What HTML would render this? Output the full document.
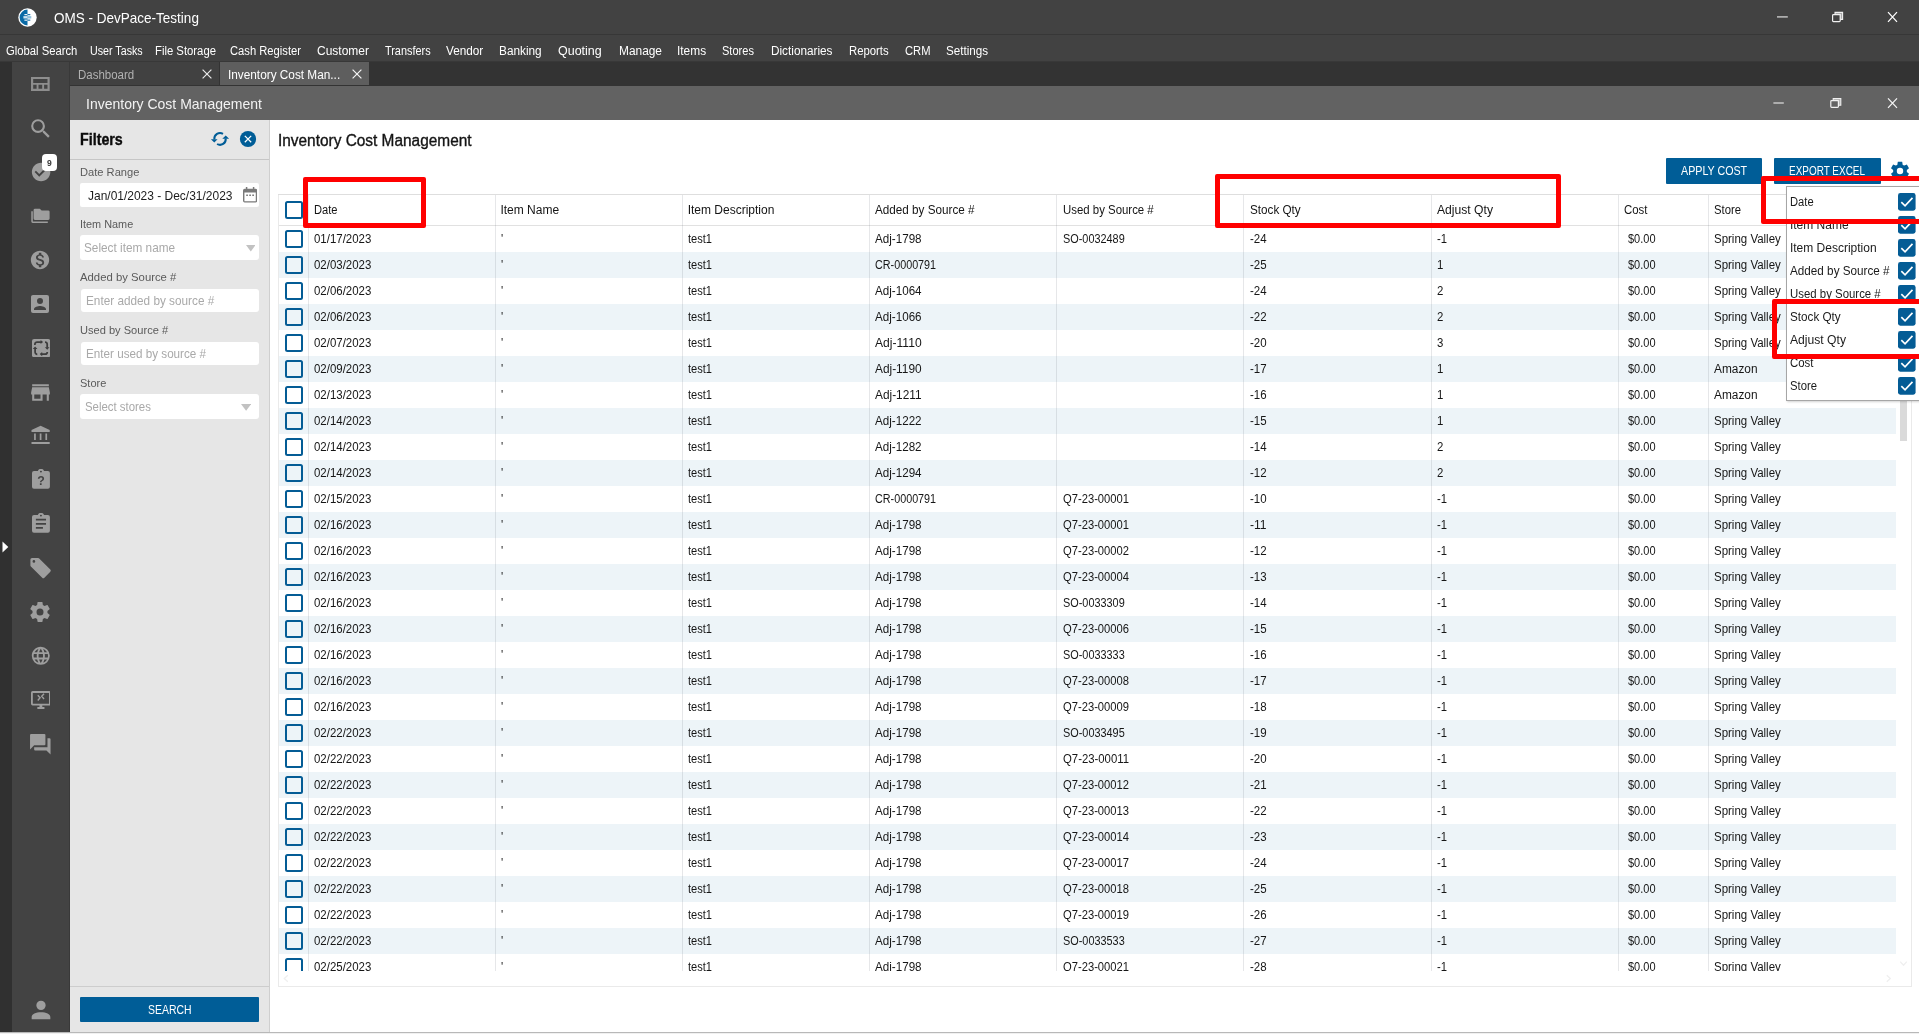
<!DOCTYPE html>
<html lang="en"><head><meta charset="utf-8"><title>OMS - DevPace-Testing</title><style>html,body{margin:0;padding:0}
body{width:1919px;height:1034px;overflow:hidden;position:relative;background:#fff;font-family:"Liberation Sans",sans-serif;}
#root{position:absolute;left:0;top:0;width:1919px;height:1034px;overflow:hidden;will-change:transform}
#root div,#root span,#root svg{position:absolute;display:block;white-space:nowrap;box-sizing:content-box}
</style></head><body><div id="root">
<div style="left:0px;top:0px;width:1919px;height:34px;background:#424242;"></div>
<div style="left:0px;top:34px;width:1919px;height:1px;background:#373737;"></div>
<div style="left:0px;top:35px;width:1919px;height:26px;background:#424242;"></div>
<div style="left:0px;top:61px;width:12px;height:971px;background:#303030;"></div>
<div style="left:12px;top:61px;width:58px;height:971px;background:#434343;"></div>
<div style="left:70px;top:61px;width:1849px;height:25px;background:#333333;"></div>
<div style="left:70px;top:62px;width:149px;height:23px;background:#414141;"></div>
<div style="left:220px;top:62px;width:149px;height:23px;background:#5e5e5e;"></div>
<div style="left:70px;top:86px;width:1849px;height:34px;background:#626262;"></div>
<div style="left:0px;top:61px;width:1919px;height:1px;background:#383838;"></div>
<div style="left:69px;top:62px;width:1px;height:970px;background:#393939;"></div>
<div style="left:70px;top:120px;width:199px;height:912px;background:#e6e6e6;"></div>
<div style="left:269px;top:120px;width:1px;height:912px;background:#cfcfcf;"></div>
<div style="left:0px;top:1032px;width:1919px;height:1px;background:#b8b8b8;"></div>
<div style="left:0px;top:1033px;width:1919px;height:1px;background:#f0f0f0;"></div>
<svg style="left:17.6px;top:7.6px" width="19" height="19" viewBox="0 0 19 19">
<circle cx="9.5" cy="9.5" r="9.2" fill="#fff"/>
<path d="M9.5 1.6 A7.9 7.9 0 0 0 9.5 17.4 Z" fill="#0a6aa6"/>
<rect x="6.4" y="6.1" width="3.1" height="1.1" fill="#fff"/><rect x="5.4" y="8.1" width="4.1" height="2.4" fill="#cfe3ef"/><rect x="6.4" y="11.6" width="3.1" height="1.1" fill="#fff"/>
<rect x="9.5" y="6.1" width="2.8" height="1.1" fill="#0a6aa6"/><rect x="9.5" y="8.1" width="3.8" height="2.4" fill="#8fc0dc"/><rect x="9.5" y="11.6" width="2.8" height="1.1" fill="#0a6aa6"/>
</svg>
<span style="left:53.90px;top:3.67px;font-size:14.5px;line-height:29px;color:#fff;transform:scaleX(0.9317);transform-origin:0 0;">OMS - DevPace-Testing</span>
<svg style="left:1760px;top:0px" width="159" height="125" viewBox="1760 0 159 125"><path d="M1777 16.9H1787.8" stroke="#c8c8c8" stroke-width="1.4" fill="none"/><path d="M1835.0 12.4H1842.6V19.400000000000002H1840.2V14.6H1835.0Z" fill="rgba(255,255,255,.55)" stroke="#f0f0f0" stroke-width="1.1"/><rect x="1832.6" y="14.6" width="7.600000000000136" height="7.000000000000002" rx="0.8" fill="#424242" stroke="#f0f0f0" stroke-width="1.2"/><path d="M1888 12.1L1897 21.9M1897 12.1L1888 21.9" stroke="#ffffff" stroke-width="1.25" fill="none"/></svg>
<svg style="left:1760px;top:0px" width="159" height="125" viewBox="1760 0 159 125"><path d="M1773.4 103H1783.8" stroke="#cfcfcf" stroke-width="1.4" fill="none"/><path d="M1833.2 98.5H1840.8V105.2H1838.4V100.7H1833.2Z" fill="rgba(255,255,255,.55)" stroke="#f0f0f0" stroke-width="1.1"/><rect x="1830.8" y="100.7" width="7.600000000000136" height="6.700000000000003" rx="0.8" fill="#626262" stroke="#f0f0f0" stroke-width="1.2"/><path d="M1888 98.4L1897 107.9M1897 98.4L1888 107.9" stroke="#f4f4f4" stroke-width="1.25" fill="none"/></svg>
<span style="left:5.80px;top:39.04px;font-size:12.3px;line-height:25px;color:#fff;transform:scaleX(0.9160);transform-origin:0 0;">Global Search</span>
<span style="left:89.50px;top:39.04px;font-size:12.3px;line-height:25px;color:#fff;transform:scaleX(0.8696);transform-origin:0 0;">User Tasks</span>
<span style="left:154.50px;top:39.04px;font-size:12.3px;line-height:25px;color:#fff;transform:scaleX(0.9198);transform-origin:0 0;">File Storage</span>
<span style="left:229.50px;top:39.04px;font-size:12.3px;line-height:25px;color:#fff;transform:scaleX(0.9110);transform-origin:0 0;">Cash Register</span>
<span style="left:316.50px;top:39.04px;font-size:12.3px;line-height:25px;color:#fff;transform:scaleX(0.9753);transform-origin:0 0;">Customer</span>
<span style="left:384.70px;top:39.04px;font-size:12.3px;line-height:25px;color:#fff;transform:scaleX(0.8856);transform-origin:0 0;">Transfers</span>
<span style="left:446.20px;top:39.04px;font-size:12.3px;line-height:25px;color:#fff;transform:scaleX(0.9568);transform-origin:0 0;">Vendor</span>
<span style="left:499.30px;top:39.04px;font-size:12.3px;line-height:25px;color:#fff;transform:scaleX(0.9606);transform-origin:0 0;">Banking</span>
<span style="left:558.30px;top:39.04px;font-size:12.3px;line-height:25px;color:#fff;transform:scaleX(1.0144);transform-origin:0 0;">Quoting</span>
<span style="left:618.50px;top:39.04px;font-size:12.3px;line-height:25px;color:#fff;transform:scaleX(0.9674);transform-origin:0 0;">Manage</span>
<span style="left:677.40px;top:39.04px;font-size:12.3px;line-height:25px;color:#fff;transform:scaleX(0.9677);transform-origin:0 0;">Items</span>
<span style="left:722.40px;top:39.04px;font-size:12.3px;line-height:25px;color:#fff;transform:scaleX(0.8974);transform-origin:0 0;">Stores</span>
<span style="left:770.80px;top:39.04px;font-size:12.3px;line-height:25px;color:#fff;transform:scaleX(0.9571);transform-origin:0 0;">Dictionaries</span>
<span style="left:848.50px;top:39.04px;font-size:12.3px;line-height:25px;color:#fff;transform:scaleX(0.9218);transform-origin:0 0;">Reports</span>
<span style="left:904.80px;top:39.04px;font-size:12.3px;line-height:25px;color:#fff;transform:scaleX(0.9103);transform-origin:0 0;">CRM</span>
<span style="left:946.40px;top:39.04px;font-size:12.3px;line-height:25px;color:#fff;transform:scaleX(0.9473);transform-origin:0 0;">Settings</span>
<span style="left:77.70px;top:63.04px;font-size:12.3px;line-height:25px;color:#b2b2b2;transform:scaleX(0.9340);transform-origin:0 0;">Dashboard</span>
<span style="left:227.80px;top:63.04px;font-size:12.3px;line-height:25px;color:#fff;transform:scaleX(0.9598);transform-origin:0 0;">Inventory Cost Man...</span>
<svg style="left:202px;top:68.9px" width="10" height="10" viewBox="0 0 10 10"><path d="M0.6 0.6L9.4 9.4M9.4 0.6L0.6 9.4" stroke="#e8e8e8" stroke-width="1.2" fill="none"/></svg>
<svg style="left:352px;top:68.9px" width="10" height="10" viewBox="0 0 10 10"><path d="M0.6 0.6L9.4 9.4M9.4 0.6L0.6 9.4" stroke="#f4f4f4" stroke-width="1.2" fill="none"/></svg>
<span style="left:86.10px;top:89.86px;font-size:14.3px;line-height:29px;color:#f2f2f2;transform:scaleX(0.9792);transform-origin:0 0;">Inventory Cost Management</span>
<svg style="left:2px;top:541px" width="7" height="12" viewBox="0 0 7 12"><path d="M0.5 0.5L6.3 6L0.5 11.5Z" fill="#fff"/></svg>
<svg style="left:31.2px;top:76.8px" width="18.7" height="14.2" viewBox="0 0 18.7 14.2"><path fill-rule="evenodd" fill="#8e8e8e" d="M0 0H18.7V14.2H0Z M2.2 2.1V5.9H16.5V2.1Z M2.2 7.7V11.7H5.6V7.7Z M7.5 7.7V11.7H11.2V7.7Z M13.1 7.7V11.7H16.5V7.7Z"/></svg>
<svg style="left:27.80px;top:115.50px" width="25.4" height="25.4" viewBox="0 0 24 24"><path d="M9.5,3A6.5,6.5 0 0,1 16,9.5C16,11.11 15.41,12.59 14.44,13.73L14.71,14H15.5L20.5,19L19,20.5L14,15.5V14.71L13.73,14.44C12.59,15.41 11.11,16 9.5,16A6.5,6.5 0 0,1 3,9.5A6.5,6.5 0 0,1 9.5,3M9.5,5C7,5 5,7 5,9.5C5,12 7,14 9.5,14C12,14 14,12 14,9.5C14,7 12,5 9.5,5Z" fill="#9e9e9e" /></svg>
<svg style="left:29.80px;top:160.90px" width="22.2" height="22.2" viewBox="0 0 24 24"><path d="M12 2C6.5 2 2 6.5 2 12S6.5 22 12 22 22 17.5 22 12 17.5 2 12 2M10 17L5 12L6.41 10.59L10 14.17L17.59 6.58L19 8L10 17Z" fill="#9e9e9e" /></svg>
<div style="left:42.3px;top:154px;width:14.6px;height:17px;background:#fff;border-radius:4px;"></div>
<span style="left:46.80px;top:153.31px;font-size:9.5px;line-height:19px;color:#3a3a3a;transform:scaleX(0.9000);transform-origin:0 0;font-weight:bold;">9</span>
<svg style="left:28px;top:204px" width="26" height="24" viewBox="28 204 26 24"><path fill="#9e9e9e" d="M35.2 208.7H39.8L41.6 210.4H48.2A1.4 1.4 0 0 1 49.6 211.8V218.6A1.4 1.4 0 0 1 48.2 220H35A1.4 1.4 0 0 1 33.6 218.6V210.1A1.4 1.4 0 0 1 35 208.7Z M31.3 211.2H32.8V221.5H47.8V223H32.7A1.4 1.4 0 0 1 31.3 221.6Z"/></svg>
<svg style="left:29.15px;top:249.00px" width="22" height="22" viewBox="0 0 24 24"><path d="M12 2C6.48 2 2 6.48 2 12s4.48 10 10 10 10-4.48 10-10S17.52 2 12 2zm1.41 16.09V20h-2.67v-1.93c-1.71-.36-3.16-1.46-3.27-3.4h1.96c.1 1.05.82 1.87 2.65 1.87 1.96 0 2.4-.98 2.4-1.59 0-.83-.44-1.61-2.67-2.14-2.48-.6-4.18-1.62-4.18-3.67 0-1.72 1.39-2.84 3.11-3.21V4h2.67v1.95c1.86.45 2.79 1.86 2.85 3.39H14.3c-.05-1.11-.64-1.87-2.22-1.87-1.5 0-2.4.68-2.4 1.64 0 .84.65 1.39 2.67 1.91s4.18 1.39 4.18 3.91c-.01 1.83-1.38 2.83-3.12 3.16z" fill="#9e9e9e" /></svg>
<svg style="left:28.15px;top:292.00px" width="24" height="24" viewBox="0 0 24 24"><path d="M6,17C6,15 10,13.9 12,13.9C14,13.9 18,15 18,17V18H6M15,9A3,3 0 0,1 12,12A3,3 0 0,1 9,9A3,3 0 0,1 12,6A3,3 0 0,1 15,9M3,5V19A2,2 0 0,0 5,21H19A2,2 0 0,0 21,19V5A2,2 0 0,0 19,3H5C3.89,3 3,3.9 3,5Z" fill="#9e9e9e" /></svg>
<svg style="left:31.85px;top:338.8px" width="18.2" height="18.3" viewBox="0 0 18.2 18.3"><rect width="18.2" height="18.3" rx="2.1" fill="#9e9e9e"/>
<g fill="none" stroke="#3d3d3d" stroke-width="1.75"><path d="M2.9 6.1V5.2A2.2 2.2 0 0 1 5.1 3H9"/><path d="M13 3A2.2 2.2 0 0 1 15.2 5.2V8.7"/><path d="M15.3 12.9A2.2 2.2 0 0 1 13.1 15.1H9.8"/><path d="M5.3 15.3A2.2 2.2 0 0 1 3.1 13.1V9.6"/></g>
<path fill="#3d3d3d" d="M8.6 0.9L11.1 3L8.6 5.1Z M12.9 8.3L15.2 10.8L17.5 8.3Z M10.2 13L7.7 15.1L10.2 17.2Z M0.8 10L3.1 7.6L5.4 10Z"/></svg>
<svg style="left:27.90px;top:379.50px" width="25" height="25" viewBox="0 0 24 24"><path d="M12,18H6V14H12M21,14V12L20,7H4L3,12V14H4V20H14V14H18V20H20V14M20,4H4V6H20V4Z" fill="#9e9e9e" /></svg>
<svg style="left:28px;top:422px" width="26" height="26" viewBox="28 422 26 26"><path fill="#9e9e9e" d="M40.6 425.8L49.7 430V431.9H31.5V430Z M34.1 433.6H35.8V440.1H34.1Z M39.75 433.6H41.45V440.1H39.75Z M45.4 433.6H47.1V440.1H45.4Z M31.5 441.9H49.7V444H31.5Z"/></svg>
<svg style="left:31.8px;top:469.1px" width="17.9" height="19.7" viewBox="0 0 18 20.5" preserveAspectRatio="none"><path fill-rule="evenodd" fill="#9e9e9e" d="M2 2.2H5.9A3.2 3.2 0 0 1 12.1 2.2H16A2 2 0 0 1 18 4.2V18.5A2 2 0 0 1 16 20.5H2A2 2 0 0 1 0 18.5V4.2A2 2 0 0 1 2 2.2Z M9 1.7A1 1 0 0 0 9 3.7A1 1 0 0 0 9 1.7Z"/>
<text x="9" y="17.1" font-family="Liberation Sans, sans-serif" font-weight="bold" font-size="12.4" text-anchor="middle" fill="#434343">?</text></svg>
<svg style="left:31.8px;top:513.2px" width="17.9" height="19.7" viewBox="0 0 18 20.5" preserveAspectRatio="none"><path fill-rule="evenodd" fill="#9e9e9e" d="M2 2.2H5.9A3.2 3.2 0 0 1 12.1 2.2H16A2 2 0 0 1 18 4.2V18.5A2 2 0 0 1 16 20.5H2A2 2 0 0 1 0 18.5V4.2A2 2 0 0 1 2 2.2Z M9 1.7A1 1 0 0 0 9 3.7A1 1 0 0 0 9 1.7Z M3.9 6V7.9H14.1V6Z M3.9 10.3V12.2H14.1V10.3Z M3.9 14.5V16.4H11V14.5Z"/></svg>
<svg style="left:27px;top:554px" width="27" height="28" viewBox="27 554 27 28"><path fill-rule="evenodd" fill="#9e9e9e" d="M32 558H38.2Q38.8 558 39.2 558.45L50.3 569.6Q51.4 570.7 50.3 571.8L44.4 577.7Q43.3 578.8 42.2 577.7L30.9 566.6Q30.4 566.1 30.4 565.5V559.6Q30.4 558 32 558Z M33.9 560.1A1.35 1.35 0 0 0 33.9 562.8A1.35 1.35 0 0 0 33.9 560.1Z"/></svg>
<svg style="left:28.40px;top:600.40px" width="24" height="24" viewBox="0 0 24 24"><path d="M12,15.5A3.5,3.5 0 0,1 8.5,12A3.5,3.5 0 0,1 12,8.5A3.5,3.5 0 0,1 15.5,12A3.5,3.5 0 0,1 12,15.5M19.43,12.97C19.47,12.65 19.5,12.33 19.5,12C19.5,11.67 19.47,11.34 19.43,11L21.54,9.37C21.73,9.22 21.78,8.95 21.66,8.73L19.66,5.27C19.54,5.05 19.27,4.96 19.05,5.05L16.56,6.05C16.04,5.66 15.5,5.32 14.87,5.07L14.5,2.42C14.46,2.18 14.25,2 14,2H10C9.75,2 9.54,2.18 9.5,2.42L9.13,5.07C8.5,5.32 7.96,5.66 7.44,6.05L4.95,5.05C4.73,4.96 4.46,5.05 4.34,5.27L2.34,8.73C2.21,8.95 2.27,9.22 2.46,9.37L4.57,11C4.53,11.34 4.5,11.67 4.5,12C4.5,12.33 4.53,12.65 4.57,12.97L2.46,14.63C2.27,14.78 2.21,15.05 2.34,15.27L4.34,18.73C4.46,18.95 4.73,19.03 4.95,18.95L7.44,17.94C7.96,18.34 8.5,18.68 9.13,18.93L9.5,21.58C9.54,21.82 9.75,22 10,22H14C14.25,22 14.46,21.82 14.5,21.58L14.87,18.93C15.5,18.67 16.04,18.34 16.56,17.94L19.05,18.95C19.27,19.03 19.54,18.95 19.66,18.73L21.66,15.27C21.78,15.05 21.73,14.78 21.54,14.63L19.43,12.97Z" fill="#9e9e9e" /></svg>
<svg style="left:29.75px;top:645.10px" width="21.6" height="21.6" viewBox="0 0 24 24"><path d="M16.36,14C16.44,13.34 16.5,12.68 16.5,12C16.5,11.32 16.44,10.66 16.36,10H19.74C19.9,10.64 20,11.31 20,12C20,12.69 19.9,13.36 19.74,14M14.59,19.56C15.19,18.45 15.65,17.25 15.97,16H18.92C17.96,17.65 16.43,18.93 14.59,19.56M14.34,14H9.66C9.56,13.34 9.5,12.68 9.5,12C9.5,11.32 9.56,10.65 9.66,10H14.34C14.43,10.65 14.5,11.32 14.5,12C14.5,12.68 14.43,13.34 14.34,14M12,19.96C11.17,18.76 10.5,17.43 10.09,16H13.91C13.5,17.43 12.83,18.76 12,19.96M8,8H5.08C6.03,6.34 7.57,5.06 9.4,4.44C8.8,5.55 8.35,6.75 8,8M5.08,16H8C8.35,17.25 8.8,18.45 9.4,19.56C7.57,18.93 6.03,17.65 5.08,16M4.26,14C4.1,13.36 4,12.69 4,12C4,11.31 4.1,10.64 4.26,10H7.64C7.56,10.66 7.5,11.32 7.5,12C7.5,12.68 7.56,13.34 7.64,14M12,4.03C12.83,5.23 13.5,6.57 13.91,8H10.09C10.5,6.57 11.17,5.23 12,4.03M18.92,8H15.97C15.65,6.75 15.19,5.55 14.59,4.44C16.43,5.07 17.96,6.34 18.92,8M12,2C6.47,2 2,6.5 2,12A10,10 0 0,0 12,22A10,10 0 0,0 22,12A10,10 0 0,0 12,2Z" fill="#9e9e9e" /></svg>
<svg style="left:30.55px;top:690.9px" width="19.8" height="18" viewBox="0 0 24 21" preserveAspectRatio="none"><path fill-rule="evenodd" fill="#9e9e9e" d="M2 0H22A2 2 0 0 1 24 2V15A2 2 0 0 1 22 17H13.7V18.7H16.3V21H7.7V18.7H10.3V17H2A2 2 0 0 1 0 15V2A2 2 0 0 1 2 0Z M2.2 2.2V14.8H21.8V2.2Z"/>
<path d="M8.2 5L11 8L8.2 11 M15.8 3.2L13 6.2L15.8 9.2" stroke="#9e9e9e" stroke-width="1.7" fill="none"/></svg>
<svg style="left:28.00px;top:732.20px" width="24.6" height="24.6" viewBox="0 0 24 24"><path d="M17,12V3A1,1 0 0,0 16,2H3A1,1 0 0,0 2,3V17L6,13H16A1,1 0 0,0 17,12M21,6H19V15H6V17A1,1 0 0,0 7,18H18L22,22V7A1,1 0 0,0 21,6Z" fill="#9e9e9e" /></svg>
<svg style="left:26.50px;top:995.60px" width="28" height="28" viewBox="0 0 24 24"><path d="M12,4A4,4 0 0,1 16,8A4,4 0 0,1 12,12A4,4 0 0,1 8,8A4,4 0 0,1 12,4M12,14C16.42,14 20,15.79 20,18V20H4V18C4,15.79 7.58,14 12,14Z" fill="#9e9e9e" /></svg>
<span style="left:79.70px;top:124.48px;font-size:15.6px;line-height:31px;color:#0c0c0c;transform:scaleX(0.9142);transform-origin:0 0;font-weight:bold;-webkit-text-stroke:0.35px #0c0c0c;">Filters</span>
<svg style="left:200px;top:124px" width="64" height="30" viewBox="200 124 64 30">
<g fill="none" stroke="#005d97" stroke-width="2"><path d="M223 133.9A5.7 5.7 0 0 0 214.35 139.4"/><path d="M217.1 144A5.7 5.7 0 0 0 225.7 138.5"/></g>
<path d="M210.9 139.2H217.6L214.3 142.4Z M222.3 138.8H229.1L225.7 135.6Z" fill="#005d97"/>
<circle cx="248" cy="139" r="8.1" fill="#005d97"/><path d="M244.8 135.9L251.2 142.2M251.2 135.9L244.8 142.2" stroke="#fff" stroke-width="1.25"/></svg>
<div style="left:70px;top:159px;width:199px;height:1px;background:#c6c6c6;"></div>
<span style="left:79.70px;top:160.34px;font-size:11.8px;line-height:24px;color:#5a5a5a;transform:scaleX(0.9432);transform-origin:0 0;">Date Range</span>
<div style="left:80px;top:183px;width:179px;height:24px;background:#fff;border-radius:2px;"></div>
<span style="left:87.50px;top:182.75px;font-size:12.8px;line-height:26px;color:#1c1c1c;transform:scaleX(0.9357);transform-origin:0 0;">Jan/01/2023 - Dec/31/2023</span>
<svg style="left:242.8px;top:187.2px" width="14.2" height="15.6" viewBox="0 0 15 16" preserveAspectRatio="none"><path fill-rule="evenodd" fill="#7a7a7a" d="M3 0H4.6V1.8H10.4V0H12V1.8H13.2A1.8 1.8 0 0 1 15 3.6V14.2A1.8 1.8 0 0 1 13.2 16H1.8A1.8 1.8 0 0 1 0 14.2V3.6A1.8 1.8 0 0 1 1.8 1.8H3Z M1.5 5.6V14.5H13.5V5.6Z M3.4 7.6H5.2V9.2H3.4Z M6.6 7.6H8.4V9.2H6.6Z M9.8 7.6H11.6V9.2H9.8Z"/></svg>
<span style="left:79.70px;top:212.34px;font-size:11.8px;line-height:24px;color:#5a5a5a;transform:scaleX(0.9219);transform-origin:0 0;">Item Name</span>
<div style="left:80px;top:235px;width:179px;height:25px;background:#fff;border-radius:3px;"></div>
<span style="left:84.40px;top:235.15px;font-size:12.8px;line-height:26px;color:#a9a9a9;transform:scaleX(0.9212);transform-origin:0 0;">Select item name</span>
<svg style="left:245.6px;top:245.3px" width="9.6" height="6.6" viewBox="0 0 9.6 6.6"><path d="M0 0H9.6L4.8 6.6Z" fill="#c2c2c2"/></svg>
<span style="left:79.70px;top:264.74px;font-size:11.8px;line-height:24px;color:#5a5a5a;transform:scaleX(0.9604);transform-origin:0 0;">Added by Source #</span>
<div style="left:80.5px;top:289px;width:178px;height:23px;background:#fff;border-radius:3px;"></div>
<span style="left:85.90px;top:288.05px;font-size:12.8px;line-height:26px;color:#a9a9a9;transform:scaleX(0.9199);transform-origin:0 0;">Enter added by source #</span>
<span style="left:79.70px;top:317.84px;font-size:11.8px;line-height:24px;color:#5a5a5a;transform:scaleX(0.9393);transform-origin:0 0;">Used by Source #</span>
<div style="left:80.5px;top:342px;width:178px;height:23px;background:#fff;border-radius:3px;"></div>
<span style="left:85.90px;top:340.95px;font-size:12.8px;line-height:26px;color:#a9a9a9;transform:scaleX(0.9124);transform-origin:0 0;">Enter used by source #</span>
<span style="left:79.70px;top:371.34px;font-size:11.8px;line-height:24px;color:#5a5a5a;transform:scaleX(0.9325);transform-origin:0 0;">Store</span>
<div style="left:80px;top:394px;width:179px;height:25.2px;background:#fff;border-radius:3px;"></div>
<span style="left:84.60px;top:394.15px;font-size:12.8px;line-height:26px;color:#a9a9a9;transform:scaleX(0.8907);transform-origin:0 0;">Select stores</span>
<svg style="left:241.2px;top:404.2px" width="10.2" height="6.8" viewBox="0 0 10.2 6.8"><path d="M0 0H10.2L5.1 6.8Z" fill="#c2c2c2"/></svg>
<div style="left:70px;top:986px;width:199px;height:1px;background:#cdcdcd;"></div>
<div style="left:80px;top:997px;width:179px;height:25px;background:#005d97;border-radius:1px;"></div>
<span style="left:147.50px;top:998.34px;font-size:12.6px;line-height:25px;color:#fff;transform:scaleX(0.8303);transform-origin:0 0;">SEARCH</span>
<span style="left:278.10px;top:124.68px;font-size:15.8px;line-height:32px;color:#141414;transform:scaleX(0.9754);transform-origin:0 0;-webkit-text-stroke:0.35px #141414;">Inventory Cost Management</span>
<div style="left:1666px;top:158px;width:96px;height:25.5px;background:#005d97;border-radius:1px;"></div>
<span style="left:1680.50px;top:158.94px;font-size:12.4px;line-height:25px;color:#fff;transform:scaleX(0.8628);transform-origin:0 0;">APPLY COST</span>
<div style="left:1774px;top:158px;width:107px;height:25.5px;background:#005d97;border-radius:1px;"></div>
<span style="left:1788.90px;top:158.94px;font-size:12.4px;line-height:25px;color:#fff;transform:scaleX(0.8040);transform-origin:0 0;">EXPORT EXCEL</span>
<svg style="left:1889px;top:160px" width="22" height="22" viewBox="0 0 24 24"><path d="M12,15.5A3.5,3.5 0 0,1 8.5,12A3.5,3.5 0 0,1 12,8.5A3.5,3.5 0 0,1 15.5,12A3.5,3.5 0 0,1 12,15.5M19.43,12.97C19.47,12.65 19.5,12.33 19.5,12C19.5,11.67 19.47,11.34 19.43,11L21.54,9.37C21.73,9.22 21.78,8.95 21.66,8.73L19.66,5.27C19.54,5.05 19.27,4.96 19.05,5.05L16.56,6.05C16.04,5.66 15.5,5.32 14.87,5.07L14.5,2.42C14.46,2.18 14.25,2 14,2H10C9.75,2 9.54,2.18 9.5,2.42L9.13,5.07C8.5,5.32 7.96,5.66 7.44,6.05L4.95,5.05C4.73,4.96 4.46,5.05 4.34,5.27L2.34,8.73C2.21,8.95 2.27,9.22 2.46,9.37L4.57,11C4.53,11.34 4.5,11.67 4.5,12C4.5,12.33 4.53,12.65 4.57,12.97L2.46,14.63C2.27,14.78 2.21,15.05 2.34,15.27L4.34,18.73C4.46,18.95 4.73,19.03 4.95,18.95L7.44,17.94C7.96,18.34 8.5,18.68 9.13,18.93L9.5,21.58C9.54,21.82 9.75,22 10,22H14C14.25,22 14.46,21.82 14.5,21.58L14.87,18.93C15.5,18.67 16.04,18.34 16.56,17.94L19.05,18.95C19.27,19.03 19.54,18.95 19.66,18.73L21.66,15.27C21.78,15.05 21.73,14.78 21.54,14.63L19.43,12.97Z" fill="#005d97"/></svg>
<div style="left:278px;top:194px;width:1634px;height:1px;background:#dedede;"></div>
<div style="left:278px;top:225px;width:1634px;height:1px;background:#e1e1e1;"></div>
<div style="left:278px;top:195px;width:1px;height:792px;background:#eaeaea;"></div>
<div style="left:1911px;top:195px;width:1px;height:792px;background:#eaeaea;"></div>
<div style="left:278px;top:986px;width:1634px;height:1px;background:#eaeaea;"></div>
<div style="left:1895px;top:226px;width:1px;height:745px;background:#ececec;"></div>
<svg style="left:1880px;top:956px" width="32" height="30" viewBox="1880 956 32 30"><path d="M1900.2 961.6L1903.5 965.2L1906.8 961.6M1886.8 975.2L1890.3 978.5L1886.8 981.8" fill="none" stroke="#efefef" stroke-width="1.3"/></svg>
<svg style="left:280px;top:972px" width="14" height="14" viewBox="280 972 14 14"><path d="M287.8 975.2L284.3 978.5L287.8 981.8" fill="none" stroke="#efefef" stroke-width="1.3"/></svg>
<div style="left:279px;top:226px;width:1617px;height:745px;overflow:hidden;background:#fff;">
<div style="left:6.2px;top:4.2px;width:13.6px;height:13.6px;border:2px solid #045c95;border-radius:2.5px;"></div>
<span style="left:34.70px;top:1.34px;font-size:12px;line-height:24px;color:#161616;transform:scaleX(0.9541);transform-origin:0 0;">01/17/2023</span>
<span style="left:222.10px;top:1.34px;font-size:12px;line-height:24px;color:#161616;transform:scaleX(0.9520);transform-origin:0 0;">&#x27;</span>
<span style="left:408.70px;top:1.34px;font-size:12px;line-height:24px;color:#161616;transform:scaleX(0.9225);transform-origin:0 0;">test1</span>
<span style="left:595.80px;top:1.34px;font-size:12px;line-height:24px;color:#161616;transform:scaleX(0.9701);transform-origin:0 0;">Adj-1798</span>
<span style="left:783.70px;top:1.34px;font-size:12px;line-height:24px;color:#161616;transform:scaleX(0.9067);transform-origin:0 0;">SO-0032489</span>
<span style="left:970.50px;top:1.34px;font-size:12px;line-height:24px;color:#161616;transform:scaleX(0.9571);transform-origin:0 0;">-24</span>
<span style="left:1157.50px;top:1.34px;font-size:12px;line-height:24px;color:#161616;transform:scaleX(0.9372);transform-origin:0 0;">-1</span>
<span style="left:1348.90px;top:1.34px;font-size:12px;line-height:24px;color:#161616;transform:scaleX(0.9158);transform-origin:0 0;">$0.00</span>
<span style="left:1434.50px;top:1.34px;font-size:12px;line-height:24px;color:#161616;transform:scaleX(0.9568);transform-origin:0 0;">Spring Valley</span>
<div style="left:0px;top:26px;width:1617px;height:26px;background:#edf4f8;"></div>
<div style="left:6.2px;top:30.2px;width:13.6px;height:13.6px;border:2px solid #045c95;border-radius:2.5px;"></div>
<span style="left:34.70px;top:27.34px;font-size:12px;line-height:24px;color:#161616;transform:scaleX(0.9541);transform-origin:0 0;">02/03/2023</span>
<span style="left:222.10px;top:27.34px;font-size:12px;line-height:24px;color:#161616;transform:scaleX(0.9520);transform-origin:0 0;">&#x27;</span>
<span style="left:408.70px;top:27.34px;font-size:12px;line-height:24px;color:#161616;transform:scaleX(0.9225);transform-origin:0 0;">test1</span>
<span style="left:595.80px;top:27.34px;font-size:12px;line-height:24px;color:#161616;transform:scaleX(0.8979);transform-origin:0 0;">CR-0000791</span>
<span style="left:970.50px;top:27.34px;font-size:12px;line-height:24px;color:#161616;transform:scaleX(0.9571);transform-origin:0 0;">-25</span>
<span style="left:1157.50px;top:27.34px;font-size:12px;line-height:24px;color:#161616;transform:scaleX(0.9520);transform-origin:0 0;">1</span>
<span style="left:1348.90px;top:27.34px;font-size:12px;line-height:24px;color:#161616;transform:scaleX(0.9158);transform-origin:0 0;">$0.00</span>
<span style="left:1434.50px;top:27.34px;font-size:12px;line-height:24px;color:#161616;transform:scaleX(0.9568);transform-origin:0 0;">Spring Valley</span>
<div style="left:6.2px;top:56.2px;width:13.6px;height:13.6px;border:2px solid #045c95;border-radius:2.5px;"></div>
<span style="left:34.70px;top:53.34px;font-size:12px;line-height:24px;color:#161616;transform:scaleX(0.9541);transform-origin:0 0;">02/06/2023</span>
<span style="left:222.10px;top:53.34px;font-size:12px;line-height:24px;color:#161616;transform:scaleX(0.9520);transform-origin:0 0;">&#x27;</span>
<span style="left:408.70px;top:53.34px;font-size:12px;line-height:24px;color:#161616;transform:scaleX(0.9225);transform-origin:0 0;">test1</span>
<span style="left:595.80px;top:53.34px;font-size:12px;line-height:24px;color:#161616;transform:scaleX(0.9701);transform-origin:0 0;">Adj-1064</span>
<span style="left:970.50px;top:53.34px;font-size:12px;line-height:24px;color:#161616;transform:scaleX(0.9571);transform-origin:0 0;">-24</span>
<span style="left:1157.50px;top:53.34px;font-size:12px;line-height:24px;color:#161616;transform:scaleX(0.9520);transform-origin:0 0;">2</span>
<span style="left:1348.90px;top:53.34px;font-size:12px;line-height:24px;color:#161616;transform:scaleX(0.9158);transform-origin:0 0;">$0.00</span>
<span style="left:1434.50px;top:53.34px;font-size:12px;line-height:24px;color:#161616;transform:scaleX(0.9568);transform-origin:0 0;">Spring Valley</span>
<div style="left:0px;top:78px;width:1617px;height:26px;background:#edf4f8;"></div>
<div style="left:6.2px;top:82.2px;width:13.6px;height:13.6px;border:2px solid #045c95;border-radius:2.5px;"></div>
<span style="left:34.70px;top:79.34px;font-size:12px;line-height:24px;color:#161616;transform:scaleX(0.9541);transform-origin:0 0;">02/06/2023</span>
<span style="left:222.10px;top:79.34px;font-size:12px;line-height:24px;color:#161616;transform:scaleX(0.9520);transform-origin:0 0;">&#x27;</span>
<span style="left:408.70px;top:79.34px;font-size:12px;line-height:24px;color:#161616;transform:scaleX(0.9225);transform-origin:0 0;">test1</span>
<span style="left:595.80px;top:79.34px;font-size:12px;line-height:24px;color:#161616;transform:scaleX(0.9701);transform-origin:0 0;">Adj-1066</span>
<span style="left:970.50px;top:79.34px;font-size:12px;line-height:24px;color:#161616;transform:scaleX(0.9571);transform-origin:0 0;">-22</span>
<span style="left:1157.50px;top:79.34px;font-size:12px;line-height:24px;color:#161616;transform:scaleX(0.9520);transform-origin:0 0;">2</span>
<span style="left:1348.90px;top:79.34px;font-size:12px;line-height:24px;color:#161616;transform:scaleX(0.9158);transform-origin:0 0;">$0.00</span>
<span style="left:1434.50px;top:79.34px;font-size:12px;line-height:24px;color:#161616;transform:scaleX(0.9568);transform-origin:0 0;">Spring Valley</span>
<div style="left:6.2px;top:108.2px;width:13.6px;height:13.6px;border:2px solid #045c95;border-radius:2.5px;"></div>
<span style="left:34.70px;top:105.34px;font-size:12px;line-height:24px;color:#161616;transform:scaleX(0.9541);transform-origin:0 0;">02/07/2023</span>
<span style="left:222.10px;top:105.34px;font-size:12px;line-height:24px;color:#161616;transform:scaleX(0.9520);transform-origin:0 0;">&#x27;</span>
<span style="left:408.70px;top:105.34px;font-size:12px;line-height:24px;color:#161616;transform:scaleX(0.9225);transform-origin:0 0;">test1</span>
<span style="left:595.80px;top:105.34px;font-size:12px;line-height:24px;color:#161616;transform:scaleX(1.0075);transform-origin:0 0;">Adj-1110</span>
<span style="left:970.50px;top:105.34px;font-size:12px;line-height:24px;color:#161616;transform:scaleX(0.9571);transform-origin:0 0;">-20</span>
<span style="left:1157.50px;top:105.34px;font-size:12px;line-height:24px;color:#161616;transform:scaleX(0.9520);transform-origin:0 0;">3</span>
<span style="left:1348.90px;top:105.34px;font-size:12px;line-height:24px;color:#161616;transform:scaleX(0.9158);transform-origin:0 0;">$0.00</span>
<span style="left:1434.50px;top:105.34px;font-size:12px;line-height:24px;color:#161616;transform:scaleX(0.9568);transform-origin:0 0;">Spring Valley</span>
<div style="left:0px;top:130px;width:1617px;height:26px;background:#edf4f8;"></div>
<div style="left:6.2px;top:134.2px;width:13.6px;height:13.6px;border:2px solid #045c95;border-radius:2.5px;"></div>
<span style="left:34.70px;top:131.34px;font-size:12px;line-height:24px;color:#161616;transform:scaleX(0.9541);transform-origin:0 0;">02/09/2023</span>
<span style="left:222.10px;top:131.34px;font-size:12px;line-height:24px;color:#161616;transform:scaleX(0.9520);transform-origin:0 0;">&#x27;</span>
<span style="left:408.70px;top:131.34px;font-size:12px;line-height:24px;color:#161616;transform:scaleX(0.9225);transform-origin:0 0;">test1</span>
<span style="left:595.80px;top:131.34px;font-size:12px;line-height:24px;color:#161616;transform:scaleX(0.9884);transform-origin:0 0;">Adj-1190</span>
<span style="left:970.50px;top:131.34px;font-size:12px;line-height:24px;color:#161616;transform:scaleX(0.9571);transform-origin:0 0;">-17</span>
<span style="left:1157.50px;top:131.34px;font-size:12px;line-height:24px;color:#161616;transform:scaleX(0.9520);transform-origin:0 0;">1</span>
<span style="left:1348.90px;top:131.34px;font-size:12px;line-height:24px;color:#161616;transform:scaleX(0.9158);transform-origin:0 0;">$0.00</span>
<span style="left:1434.50px;top:131.34px;font-size:12px;line-height:24px;color:#161616;transform:scaleX(0.9881);transform-origin:0 0;">Amazon</span>
<div style="left:6.2px;top:160.2px;width:13.6px;height:13.6px;border:2px solid #045c95;border-radius:2.5px;"></div>
<span style="left:34.70px;top:157.34px;font-size:12px;line-height:24px;color:#161616;transform:scaleX(0.9541);transform-origin:0 0;">02/13/2023</span>
<span style="left:222.10px;top:157.34px;font-size:12px;line-height:24px;color:#161616;transform:scaleX(0.9520);transform-origin:0 0;">&#x27;</span>
<span style="left:408.70px;top:157.34px;font-size:12px;line-height:24px;color:#161616;transform:scaleX(0.9225);transform-origin:0 0;">test1</span>
<span style="left:595.80px;top:157.34px;font-size:12px;line-height:24px;color:#161616;transform:scaleX(0.9884);transform-origin:0 0;">Adj-1211</span>
<span style="left:970.50px;top:157.34px;font-size:12px;line-height:24px;color:#161616;transform:scaleX(0.9571);transform-origin:0 0;">-16</span>
<span style="left:1157.50px;top:157.34px;font-size:12px;line-height:24px;color:#161616;transform:scaleX(0.9520);transform-origin:0 0;">1</span>
<span style="left:1348.90px;top:157.34px;font-size:12px;line-height:24px;color:#161616;transform:scaleX(0.9158);transform-origin:0 0;">$0.00</span>
<span style="left:1434.50px;top:157.34px;font-size:12px;line-height:24px;color:#161616;transform:scaleX(0.9881);transform-origin:0 0;">Amazon</span>
<div style="left:0px;top:182px;width:1617px;height:26px;background:#edf4f8;"></div>
<div style="left:6.2px;top:186.2px;width:13.6px;height:13.6px;border:2px solid #045c95;border-radius:2.5px;"></div>
<span style="left:34.70px;top:183.34px;font-size:12px;line-height:24px;color:#161616;transform:scaleX(0.9541);transform-origin:0 0;">02/14/2023</span>
<span style="left:222.10px;top:183.34px;font-size:12px;line-height:24px;color:#161616;transform:scaleX(0.9520);transform-origin:0 0;">&#x27;</span>
<span style="left:408.70px;top:183.34px;font-size:12px;line-height:24px;color:#161616;transform:scaleX(0.9225);transform-origin:0 0;">test1</span>
<span style="left:595.80px;top:183.34px;font-size:12px;line-height:24px;color:#161616;transform:scaleX(0.9701);transform-origin:0 0;">Adj-1222</span>
<span style="left:970.50px;top:183.34px;font-size:12px;line-height:24px;color:#161616;transform:scaleX(0.9571);transform-origin:0 0;">-15</span>
<span style="left:1157.50px;top:183.34px;font-size:12px;line-height:24px;color:#161616;transform:scaleX(0.9520);transform-origin:0 0;">1</span>
<span style="left:1348.90px;top:183.34px;font-size:12px;line-height:24px;color:#161616;transform:scaleX(0.9158);transform-origin:0 0;">$0.00</span>
<span style="left:1434.50px;top:183.34px;font-size:12px;line-height:24px;color:#161616;transform:scaleX(0.9568);transform-origin:0 0;">Spring Valley</span>
<div style="left:6.2px;top:212.2px;width:13.6px;height:13.6px;border:2px solid #045c95;border-radius:2.5px;"></div>
<span style="left:34.70px;top:209.34px;font-size:12px;line-height:24px;color:#161616;transform:scaleX(0.9541);transform-origin:0 0;">02/14/2023</span>
<span style="left:222.10px;top:209.34px;font-size:12px;line-height:24px;color:#161616;transform:scaleX(0.9520);transform-origin:0 0;">&#x27;</span>
<span style="left:408.70px;top:209.34px;font-size:12px;line-height:24px;color:#161616;transform:scaleX(0.9225);transform-origin:0 0;">test1</span>
<span style="left:595.80px;top:209.34px;font-size:12px;line-height:24px;color:#161616;transform:scaleX(0.9701);transform-origin:0 0;">Adj-1282</span>
<span style="left:970.50px;top:209.34px;font-size:12px;line-height:24px;color:#161616;transform:scaleX(0.9571);transform-origin:0 0;">-14</span>
<span style="left:1157.50px;top:209.34px;font-size:12px;line-height:24px;color:#161616;transform:scaleX(0.9520);transform-origin:0 0;">2</span>
<span style="left:1348.90px;top:209.34px;font-size:12px;line-height:24px;color:#161616;transform:scaleX(0.9158);transform-origin:0 0;">$0.00</span>
<span style="left:1434.50px;top:209.34px;font-size:12px;line-height:24px;color:#161616;transform:scaleX(0.9568);transform-origin:0 0;">Spring Valley</span>
<div style="left:0px;top:234px;width:1617px;height:26px;background:#edf4f8;"></div>
<div style="left:6.2px;top:238.2px;width:13.6px;height:13.6px;border:2px solid #045c95;border-radius:2.5px;"></div>
<span style="left:34.70px;top:235.34px;font-size:12px;line-height:24px;color:#161616;transform:scaleX(0.9541);transform-origin:0 0;">02/14/2023</span>
<span style="left:222.10px;top:235.34px;font-size:12px;line-height:24px;color:#161616;transform:scaleX(0.9520);transform-origin:0 0;">&#x27;</span>
<span style="left:408.70px;top:235.34px;font-size:12px;line-height:24px;color:#161616;transform:scaleX(0.9225);transform-origin:0 0;">test1</span>
<span style="left:595.80px;top:235.34px;font-size:12px;line-height:24px;color:#161616;transform:scaleX(0.9701);transform-origin:0 0;">Adj-1294</span>
<span style="left:970.50px;top:235.34px;font-size:12px;line-height:24px;color:#161616;transform:scaleX(0.9571);transform-origin:0 0;">-12</span>
<span style="left:1157.50px;top:235.34px;font-size:12px;line-height:24px;color:#161616;transform:scaleX(0.9520);transform-origin:0 0;">2</span>
<span style="left:1348.90px;top:235.34px;font-size:12px;line-height:24px;color:#161616;transform:scaleX(0.9158);transform-origin:0 0;">$0.00</span>
<span style="left:1434.50px;top:235.34px;font-size:12px;line-height:24px;color:#161616;transform:scaleX(0.9568);transform-origin:0 0;">Spring Valley</span>
<div style="left:6.2px;top:264.2px;width:13.6px;height:13.6px;border:2px solid #045c95;border-radius:2.5px;"></div>
<span style="left:34.70px;top:261.34px;font-size:12px;line-height:24px;color:#161616;transform:scaleX(0.9541);transform-origin:0 0;">02/15/2023</span>
<span style="left:222.10px;top:261.34px;font-size:12px;line-height:24px;color:#161616;transform:scaleX(0.9520);transform-origin:0 0;">&#x27;</span>
<span style="left:408.70px;top:261.34px;font-size:12px;line-height:24px;color:#161616;transform:scaleX(0.9225);transform-origin:0 0;">test1</span>
<span style="left:595.80px;top:261.34px;font-size:12px;line-height:24px;color:#161616;transform:scaleX(0.8979);transform-origin:0 0;">CR-0000791</span>
<span style="left:783.70px;top:261.34px;font-size:12px;line-height:24px;color:#161616;transform:scaleX(0.9333);transform-origin:0 0;">Q7-23-00001</span>
<span style="left:970.50px;top:261.34px;font-size:12px;line-height:24px;color:#161616;transform:scaleX(0.9571);transform-origin:0 0;">-10</span>
<span style="left:1157.50px;top:261.34px;font-size:12px;line-height:24px;color:#161616;transform:scaleX(0.9372);transform-origin:0 0;">-1</span>
<span style="left:1348.90px;top:261.34px;font-size:12px;line-height:24px;color:#161616;transform:scaleX(0.9158);transform-origin:0 0;">$0.00</span>
<span style="left:1434.50px;top:261.34px;font-size:12px;line-height:24px;color:#161616;transform:scaleX(0.9568);transform-origin:0 0;">Spring Valley</span>
<div style="left:0px;top:286px;width:1617px;height:26px;background:#edf4f8;"></div>
<div style="left:6.2px;top:290.2px;width:13.6px;height:13.6px;border:2px solid #045c95;border-radius:2.5px;"></div>
<span style="left:34.70px;top:287.34px;font-size:12px;line-height:24px;color:#161616;transform:scaleX(0.9541);transform-origin:0 0;">02/16/2023</span>
<span style="left:222.10px;top:287.34px;font-size:12px;line-height:24px;color:#161616;transform:scaleX(0.9520);transform-origin:0 0;">&#x27;</span>
<span style="left:408.70px;top:287.34px;font-size:12px;line-height:24px;color:#161616;transform:scaleX(0.9225);transform-origin:0 0;">test1</span>
<span style="left:595.80px;top:287.34px;font-size:12px;line-height:24px;color:#161616;transform:scaleX(0.9701);transform-origin:0 0;">Adj-1798</span>
<span style="left:783.70px;top:287.34px;font-size:12px;line-height:24px;color:#161616;transform:scaleX(0.9333);transform-origin:0 0;">Q7-23-00001</span>
<span style="left:970.50px;top:287.34px;font-size:12px;line-height:24px;color:#161616;transform:scaleX(1.0089);transform-origin:0 0;">-11</span>
<span style="left:1157.50px;top:287.34px;font-size:12px;line-height:24px;color:#161616;transform:scaleX(0.9372);transform-origin:0 0;">-1</span>
<span style="left:1348.90px;top:287.34px;font-size:12px;line-height:24px;color:#161616;transform:scaleX(0.9158);transform-origin:0 0;">$0.00</span>
<span style="left:1434.50px;top:287.34px;font-size:12px;line-height:24px;color:#161616;transform:scaleX(0.9568);transform-origin:0 0;">Spring Valley</span>
<div style="left:6.2px;top:316.2px;width:13.6px;height:13.6px;border:2px solid #045c95;border-radius:2.5px;"></div>
<span style="left:34.70px;top:313.34px;font-size:12px;line-height:24px;color:#161616;transform:scaleX(0.9541);transform-origin:0 0;">02/16/2023</span>
<span style="left:222.10px;top:313.34px;font-size:12px;line-height:24px;color:#161616;transform:scaleX(0.9520);transform-origin:0 0;">&#x27;</span>
<span style="left:408.70px;top:313.34px;font-size:12px;line-height:24px;color:#161616;transform:scaleX(0.9225);transform-origin:0 0;">test1</span>
<span style="left:595.80px;top:313.34px;font-size:12px;line-height:24px;color:#161616;transform:scaleX(0.9701);transform-origin:0 0;">Adj-1798</span>
<span style="left:783.70px;top:313.34px;font-size:12px;line-height:24px;color:#161616;transform:scaleX(0.9333);transform-origin:0 0;">Q7-23-00002</span>
<span style="left:970.50px;top:313.34px;font-size:12px;line-height:24px;color:#161616;transform:scaleX(0.9571);transform-origin:0 0;">-12</span>
<span style="left:1157.50px;top:313.34px;font-size:12px;line-height:24px;color:#161616;transform:scaleX(0.9372);transform-origin:0 0;">-1</span>
<span style="left:1348.90px;top:313.34px;font-size:12px;line-height:24px;color:#161616;transform:scaleX(0.9158);transform-origin:0 0;">$0.00</span>
<span style="left:1434.50px;top:313.34px;font-size:12px;line-height:24px;color:#161616;transform:scaleX(0.9568);transform-origin:0 0;">Spring Valley</span>
<div style="left:0px;top:338px;width:1617px;height:26px;background:#edf4f8;"></div>
<div style="left:6.2px;top:342.2px;width:13.6px;height:13.6px;border:2px solid #045c95;border-radius:2.5px;"></div>
<span style="left:34.70px;top:339.34px;font-size:12px;line-height:24px;color:#161616;transform:scaleX(0.9541);transform-origin:0 0;">02/16/2023</span>
<span style="left:222.10px;top:339.34px;font-size:12px;line-height:24px;color:#161616;transform:scaleX(0.9520);transform-origin:0 0;">&#x27;</span>
<span style="left:408.70px;top:339.34px;font-size:12px;line-height:24px;color:#161616;transform:scaleX(0.9225);transform-origin:0 0;">test1</span>
<span style="left:595.80px;top:339.34px;font-size:12px;line-height:24px;color:#161616;transform:scaleX(0.9701);transform-origin:0 0;">Adj-1798</span>
<span style="left:783.70px;top:339.34px;font-size:12px;line-height:24px;color:#161616;transform:scaleX(0.9333);transform-origin:0 0;">Q7-23-00004</span>
<span style="left:970.50px;top:339.34px;font-size:12px;line-height:24px;color:#161616;transform:scaleX(0.9571);transform-origin:0 0;">-13</span>
<span style="left:1157.50px;top:339.34px;font-size:12px;line-height:24px;color:#161616;transform:scaleX(0.9372);transform-origin:0 0;">-1</span>
<span style="left:1348.90px;top:339.34px;font-size:12px;line-height:24px;color:#161616;transform:scaleX(0.9158);transform-origin:0 0;">$0.00</span>
<span style="left:1434.50px;top:339.34px;font-size:12px;line-height:24px;color:#161616;transform:scaleX(0.9568);transform-origin:0 0;">Spring Valley</span>
<div style="left:6.2px;top:368.2px;width:13.6px;height:13.6px;border:2px solid #045c95;border-radius:2.5px;"></div>
<span style="left:34.70px;top:365.34px;font-size:12px;line-height:24px;color:#161616;transform:scaleX(0.9541);transform-origin:0 0;">02/16/2023</span>
<span style="left:222.10px;top:365.34px;font-size:12px;line-height:24px;color:#161616;transform:scaleX(0.9520);transform-origin:0 0;">&#x27;</span>
<span style="left:408.70px;top:365.34px;font-size:12px;line-height:24px;color:#161616;transform:scaleX(0.9225);transform-origin:0 0;">test1</span>
<span style="left:595.80px;top:365.34px;font-size:12px;line-height:24px;color:#161616;transform:scaleX(0.9701);transform-origin:0 0;">Adj-1798</span>
<span style="left:783.70px;top:365.34px;font-size:12px;line-height:24px;color:#161616;transform:scaleX(0.9067);transform-origin:0 0;">SO-0033309</span>
<span style="left:970.50px;top:365.34px;font-size:12px;line-height:24px;color:#161616;transform:scaleX(0.9571);transform-origin:0 0;">-14</span>
<span style="left:1157.50px;top:365.34px;font-size:12px;line-height:24px;color:#161616;transform:scaleX(0.9372);transform-origin:0 0;">-1</span>
<span style="left:1348.90px;top:365.34px;font-size:12px;line-height:24px;color:#161616;transform:scaleX(0.9158);transform-origin:0 0;">$0.00</span>
<span style="left:1434.50px;top:365.34px;font-size:12px;line-height:24px;color:#161616;transform:scaleX(0.9568);transform-origin:0 0;">Spring Valley</span>
<div style="left:0px;top:390px;width:1617px;height:26px;background:#edf4f8;"></div>
<div style="left:6.2px;top:394.2px;width:13.6px;height:13.6px;border:2px solid #045c95;border-radius:2.5px;"></div>
<span style="left:34.70px;top:391.34px;font-size:12px;line-height:24px;color:#161616;transform:scaleX(0.9541);transform-origin:0 0;">02/16/2023</span>
<span style="left:222.10px;top:391.34px;font-size:12px;line-height:24px;color:#161616;transform:scaleX(0.9520);transform-origin:0 0;">&#x27;</span>
<span style="left:408.70px;top:391.34px;font-size:12px;line-height:24px;color:#161616;transform:scaleX(0.9225);transform-origin:0 0;">test1</span>
<span style="left:595.80px;top:391.34px;font-size:12px;line-height:24px;color:#161616;transform:scaleX(0.9701);transform-origin:0 0;">Adj-1798</span>
<span style="left:783.70px;top:391.34px;font-size:12px;line-height:24px;color:#161616;transform:scaleX(0.9333);transform-origin:0 0;">Q7-23-00006</span>
<span style="left:970.50px;top:391.34px;font-size:12px;line-height:24px;color:#161616;transform:scaleX(0.9571);transform-origin:0 0;">-15</span>
<span style="left:1157.50px;top:391.34px;font-size:12px;line-height:24px;color:#161616;transform:scaleX(0.9372);transform-origin:0 0;">-1</span>
<span style="left:1348.90px;top:391.34px;font-size:12px;line-height:24px;color:#161616;transform:scaleX(0.9158);transform-origin:0 0;">$0.00</span>
<span style="left:1434.50px;top:391.34px;font-size:12px;line-height:24px;color:#161616;transform:scaleX(0.9568);transform-origin:0 0;">Spring Valley</span>
<div style="left:6.2px;top:420.2px;width:13.6px;height:13.6px;border:2px solid #045c95;border-radius:2.5px;"></div>
<span style="left:34.70px;top:417.34px;font-size:12px;line-height:24px;color:#161616;transform:scaleX(0.9541);transform-origin:0 0;">02/16/2023</span>
<span style="left:222.10px;top:417.34px;font-size:12px;line-height:24px;color:#161616;transform:scaleX(0.9520);transform-origin:0 0;">&#x27;</span>
<span style="left:408.70px;top:417.34px;font-size:12px;line-height:24px;color:#161616;transform:scaleX(0.9225);transform-origin:0 0;">test1</span>
<span style="left:595.80px;top:417.34px;font-size:12px;line-height:24px;color:#161616;transform:scaleX(0.9701);transform-origin:0 0;">Adj-1798</span>
<span style="left:783.70px;top:417.34px;font-size:12px;line-height:24px;color:#161616;transform:scaleX(0.9067);transform-origin:0 0;">SO-0033333</span>
<span style="left:970.50px;top:417.34px;font-size:12px;line-height:24px;color:#161616;transform:scaleX(0.9571);transform-origin:0 0;">-16</span>
<span style="left:1157.50px;top:417.34px;font-size:12px;line-height:24px;color:#161616;transform:scaleX(0.9372);transform-origin:0 0;">-1</span>
<span style="left:1348.90px;top:417.34px;font-size:12px;line-height:24px;color:#161616;transform:scaleX(0.9158);transform-origin:0 0;">$0.00</span>
<span style="left:1434.50px;top:417.34px;font-size:12px;line-height:24px;color:#161616;transform:scaleX(0.9568);transform-origin:0 0;">Spring Valley</span>
<div style="left:0px;top:442px;width:1617px;height:26px;background:#edf4f8;"></div>
<div style="left:6.2px;top:446.2px;width:13.6px;height:13.6px;border:2px solid #045c95;border-radius:2.5px;"></div>
<span style="left:34.70px;top:443.34px;font-size:12px;line-height:24px;color:#161616;transform:scaleX(0.9541);transform-origin:0 0;">02/16/2023</span>
<span style="left:222.10px;top:443.34px;font-size:12px;line-height:24px;color:#161616;transform:scaleX(0.9520);transform-origin:0 0;">&#x27;</span>
<span style="left:408.70px;top:443.34px;font-size:12px;line-height:24px;color:#161616;transform:scaleX(0.9225);transform-origin:0 0;">test1</span>
<span style="left:595.80px;top:443.34px;font-size:12px;line-height:24px;color:#161616;transform:scaleX(0.9701);transform-origin:0 0;">Adj-1798</span>
<span style="left:783.70px;top:443.34px;font-size:12px;line-height:24px;color:#161616;transform:scaleX(0.9333);transform-origin:0 0;">Q7-23-00008</span>
<span style="left:970.50px;top:443.34px;font-size:12px;line-height:24px;color:#161616;transform:scaleX(0.9571);transform-origin:0 0;">-17</span>
<span style="left:1157.50px;top:443.34px;font-size:12px;line-height:24px;color:#161616;transform:scaleX(0.9372);transform-origin:0 0;">-1</span>
<span style="left:1348.90px;top:443.34px;font-size:12px;line-height:24px;color:#161616;transform:scaleX(0.9158);transform-origin:0 0;">$0.00</span>
<span style="left:1434.50px;top:443.34px;font-size:12px;line-height:24px;color:#161616;transform:scaleX(0.9568);transform-origin:0 0;">Spring Valley</span>
<div style="left:6.2px;top:472.2px;width:13.6px;height:13.6px;border:2px solid #045c95;border-radius:2.5px;"></div>
<span style="left:34.70px;top:469.34px;font-size:12px;line-height:24px;color:#161616;transform:scaleX(0.9541);transform-origin:0 0;">02/16/2023</span>
<span style="left:222.10px;top:469.34px;font-size:12px;line-height:24px;color:#161616;transform:scaleX(0.9520);transform-origin:0 0;">&#x27;</span>
<span style="left:408.70px;top:469.34px;font-size:12px;line-height:24px;color:#161616;transform:scaleX(0.9225);transform-origin:0 0;">test1</span>
<span style="left:595.80px;top:469.34px;font-size:12px;line-height:24px;color:#161616;transform:scaleX(0.9701);transform-origin:0 0;">Adj-1798</span>
<span style="left:783.70px;top:469.34px;font-size:12px;line-height:24px;color:#161616;transform:scaleX(0.9333);transform-origin:0 0;">Q7-23-00009</span>
<span style="left:970.50px;top:469.34px;font-size:12px;line-height:24px;color:#161616;transform:scaleX(0.9571);transform-origin:0 0;">-18</span>
<span style="left:1157.50px;top:469.34px;font-size:12px;line-height:24px;color:#161616;transform:scaleX(0.9372);transform-origin:0 0;">-1</span>
<span style="left:1348.90px;top:469.34px;font-size:12px;line-height:24px;color:#161616;transform:scaleX(0.9158);transform-origin:0 0;">$0.00</span>
<span style="left:1434.50px;top:469.34px;font-size:12px;line-height:24px;color:#161616;transform:scaleX(0.9568);transform-origin:0 0;">Spring Valley</span>
<div style="left:0px;top:494px;width:1617px;height:26px;background:#edf4f8;"></div>
<div style="left:6.2px;top:498.2px;width:13.6px;height:13.6px;border:2px solid #045c95;border-radius:2.5px;"></div>
<span style="left:34.70px;top:495.34px;font-size:12px;line-height:24px;color:#161616;transform:scaleX(0.9541);transform-origin:0 0;">02/22/2023</span>
<span style="left:222.10px;top:495.34px;font-size:12px;line-height:24px;color:#161616;transform:scaleX(0.9520);transform-origin:0 0;">&#x27;</span>
<span style="left:408.70px;top:495.34px;font-size:12px;line-height:24px;color:#161616;transform:scaleX(0.9225);transform-origin:0 0;">test1</span>
<span style="left:595.80px;top:495.34px;font-size:12px;line-height:24px;color:#161616;transform:scaleX(0.9701);transform-origin:0 0;">Adj-1798</span>
<span style="left:783.70px;top:495.34px;font-size:12px;line-height:24px;color:#161616;transform:scaleX(0.9067);transform-origin:0 0;">SO-0033495</span>
<span style="left:970.50px;top:495.34px;font-size:12px;line-height:24px;color:#161616;transform:scaleX(0.9571);transform-origin:0 0;">-19</span>
<span style="left:1157.50px;top:495.34px;font-size:12px;line-height:24px;color:#161616;transform:scaleX(0.9372);transform-origin:0 0;">-1</span>
<span style="left:1348.90px;top:495.34px;font-size:12px;line-height:24px;color:#161616;transform:scaleX(0.9158);transform-origin:0 0;">$0.00</span>
<span style="left:1434.50px;top:495.34px;font-size:12px;line-height:24px;color:#161616;transform:scaleX(0.9568);transform-origin:0 0;">Spring Valley</span>
<div style="left:6.2px;top:524.2px;width:13.6px;height:13.6px;border:2px solid #045c95;border-radius:2.5px;"></div>
<span style="left:34.70px;top:521.34px;font-size:12px;line-height:24px;color:#161616;transform:scaleX(0.9541);transform-origin:0 0;">02/22/2023</span>
<span style="left:222.10px;top:521.34px;font-size:12px;line-height:24px;color:#161616;transform:scaleX(0.9520);transform-origin:0 0;">&#x27;</span>
<span style="left:408.70px;top:521.34px;font-size:12px;line-height:24px;color:#161616;transform:scaleX(0.9225);transform-origin:0 0;">test1</span>
<span style="left:595.80px;top:521.34px;font-size:12px;line-height:24px;color:#161616;transform:scaleX(0.9701);transform-origin:0 0;">Adj-1798</span>
<span style="left:783.70px;top:521.34px;font-size:12px;line-height:24px;color:#161616;transform:scaleX(0.9452);transform-origin:0 0;">Q7-23-00011</span>
<span style="left:970.50px;top:521.34px;font-size:12px;line-height:24px;color:#161616;transform:scaleX(0.9571);transform-origin:0 0;">-20</span>
<span style="left:1157.50px;top:521.34px;font-size:12px;line-height:24px;color:#161616;transform:scaleX(0.9372);transform-origin:0 0;">-1</span>
<span style="left:1348.90px;top:521.34px;font-size:12px;line-height:24px;color:#161616;transform:scaleX(0.9158);transform-origin:0 0;">$0.00</span>
<span style="left:1434.50px;top:521.34px;font-size:12px;line-height:24px;color:#161616;transform:scaleX(0.9568);transform-origin:0 0;">Spring Valley</span>
<div style="left:0px;top:546px;width:1617px;height:26px;background:#edf4f8;"></div>
<div style="left:6.2px;top:550.2px;width:13.6px;height:13.6px;border:2px solid #045c95;border-radius:2.5px;"></div>
<span style="left:34.70px;top:547.34px;font-size:12px;line-height:24px;color:#161616;transform:scaleX(0.9541);transform-origin:0 0;">02/22/2023</span>
<span style="left:222.10px;top:547.34px;font-size:12px;line-height:24px;color:#161616;transform:scaleX(0.9520);transform-origin:0 0;">&#x27;</span>
<span style="left:408.70px;top:547.34px;font-size:12px;line-height:24px;color:#161616;transform:scaleX(0.9225);transform-origin:0 0;">test1</span>
<span style="left:595.80px;top:547.34px;font-size:12px;line-height:24px;color:#161616;transform:scaleX(0.9701);transform-origin:0 0;">Adj-1798</span>
<span style="left:783.70px;top:547.34px;font-size:12px;line-height:24px;color:#161616;transform:scaleX(0.9333);transform-origin:0 0;">Q7-23-00012</span>
<span style="left:970.50px;top:547.34px;font-size:12px;line-height:24px;color:#161616;transform:scaleX(0.9571);transform-origin:0 0;">-21</span>
<span style="left:1157.50px;top:547.34px;font-size:12px;line-height:24px;color:#161616;transform:scaleX(0.9372);transform-origin:0 0;">-1</span>
<span style="left:1348.90px;top:547.34px;font-size:12px;line-height:24px;color:#161616;transform:scaleX(0.9158);transform-origin:0 0;">$0.00</span>
<span style="left:1434.50px;top:547.34px;font-size:12px;line-height:24px;color:#161616;transform:scaleX(0.9568);transform-origin:0 0;">Spring Valley</span>
<div style="left:6.2px;top:576.2px;width:13.6px;height:13.6px;border:2px solid #045c95;border-radius:2.5px;"></div>
<span style="left:34.70px;top:573.34px;font-size:12px;line-height:24px;color:#161616;transform:scaleX(0.9541);transform-origin:0 0;">02/22/2023</span>
<span style="left:222.10px;top:573.34px;font-size:12px;line-height:24px;color:#161616;transform:scaleX(0.9520);transform-origin:0 0;">&#x27;</span>
<span style="left:408.70px;top:573.34px;font-size:12px;line-height:24px;color:#161616;transform:scaleX(0.9225);transform-origin:0 0;">test1</span>
<span style="left:595.80px;top:573.34px;font-size:12px;line-height:24px;color:#161616;transform:scaleX(0.9701);transform-origin:0 0;">Adj-1798</span>
<span style="left:783.70px;top:573.34px;font-size:12px;line-height:24px;color:#161616;transform:scaleX(0.9333);transform-origin:0 0;">Q7-23-00013</span>
<span style="left:970.50px;top:573.34px;font-size:12px;line-height:24px;color:#161616;transform:scaleX(0.9571);transform-origin:0 0;">-22</span>
<span style="left:1157.50px;top:573.34px;font-size:12px;line-height:24px;color:#161616;transform:scaleX(0.9372);transform-origin:0 0;">-1</span>
<span style="left:1348.90px;top:573.34px;font-size:12px;line-height:24px;color:#161616;transform:scaleX(0.9158);transform-origin:0 0;">$0.00</span>
<span style="left:1434.50px;top:573.34px;font-size:12px;line-height:24px;color:#161616;transform:scaleX(0.9568);transform-origin:0 0;">Spring Valley</span>
<div style="left:0px;top:598px;width:1617px;height:26px;background:#edf4f8;"></div>
<div style="left:6.2px;top:602.2px;width:13.6px;height:13.6px;border:2px solid #045c95;border-radius:2.5px;"></div>
<span style="left:34.70px;top:599.34px;font-size:12px;line-height:24px;color:#161616;transform:scaleX(0.9541);transform-origin:0 0;">02/22/2023</span>
<span style="left:222.10px;top:599.34px;font-size:12px;line-height:24px;color:#161616;transform:scaleX(0.9520);transform-origin:0 0;">&#x27;</span>
<span style="left:408.70px;top:599.34px;font-size:12px;line-height:24px;color:#161616;transform:scaleX(0.9225);transform-origin:0 0;">test1</span>
<span style="left:595.80px;top:599.34px;font-size:12px;line-height:24px;color:#161616;transform:scaleX(0.9701);transform-origin:0 0;">Adj-1798</span>
<span style="left:783.70px;top:599.34px;font-size:12px;line-height:24px;color:#161616;transform:scaleX(0.9333);transform-origin:0 0;">Q7-23-00014</span>
<span style="left:970.50px;top:599.34px;font-size:12px;line-height:24px;color:#161616;transform:scaleX(0.9571);transform-origin:0 0;">-23</span>
<span style="left:1157.50px;top:599.34px;font-size:12px;line-height:24px;color:#161616;transform:scaleX(0.9372);transform-origin:0 0;">-1</span>
<span style="left:1348.90px;top:599.34px;font-size:12px;line-height:24px;color:#161616;transform:scaleX(0.9158);transform-origin:0 0;">$0.00</span>
<span style="left:1434.50px;top:599.34px;font-size:12px;line-height:24px;color:#161616;transform:scaleX(0.9568);transform-origin:0 0;">Spring Valley</span>
<div style="left:6.2px;top:628.2px;width:13.6px;height:13.6px;border:2px solid #045c95;border-radius:2.5px;"></div>
<span style="left:34.70px;top:625.34px;font-size:12px;line-height:24px;color:#161616;transform:scaleX(0.9541);transform-origin:0 0;">02/22/2023</span>
<span style="left:222.10px;top:625.34px;font-size:12px;line-height:24px;color:#161616;transform:scaleX(0.9520);transform-origin:0 0;">&#x27;</span>
<span style="left:408.70px;top:625.34px;font-size:12px;line-height:24px;color:#161616;transform:scaleX(0.9225);transform-origin:0 0;">test1</span>
<span style="left:595.80px;top:625.34px;font-size:12px;line-height:24px;color:#161616;transform:scaleX(0.9701);transform-origin:0 0;">Adj-1798</span>
<span style="left:783.70px;top:625.34px;font-size:12px;line-height:24px;color:#161616;transform:scaleX(0.9333);transform-origin:0 0;">Q7-23-00017</span>
<span style="left:970.50px;top:625.34px;font-size:12px;line-height:24px;color:#161616;transform:scaleX(0.9571);transform-origin:0 0;">-24</span>
<span style="left:1157.50px;top:625.34px;font-size:12px;line-height:24px;color:#161616;transform:scaleX(0.9372);transform-origin:0 0;">-1</span>
<span style="left:1348.90px;top:625.34px;font-size:12px;line-height:24px;color:#161616;transform:scaleX(0.9158);transform-origin:0 0;">$0.00</span>
<span style="left:1434.50px;top:625.34px;font-size:12px;line-height:24px;color:#161616;transform:scaleX(0.9568);transform-origin:0 0;">Spring Valley</span>
<div style="left:0px;top:650px;width:1617px;height:26px;background:#edf4f8;"></div>
<div style="left:6.2px;top:654.2px;width:13.6px;height:13.6px;border:2px solid #045c95;border-radius:2.5px;"></div>
<span style="left:34.70px;top:651.34px;font-size:12px;line-height:24px;color:#161616;transform:scaleX(0.9541);transform-origin:0 0;">02/22/2023</span>
<span style="left:222.10px;top:651.34px;font-size:12px;line-height:24px;color:#161616;transform:scaleX(0.9520);transform-origin:0 0;">&#x27;</span>
<span style="left:408.70px;top:651.34px;font-size:12px;line-height:24px;color:#161616;transform:scaleX(0.9225);transform-origin:0 0;">test1</span>
<span style="left:595.80px;top:651.34px;font-size:12px;line-height:24px;color:#161616;transform:scaleX(0.9701);transform-origin:0 0;">Adj-1798</span>
<span style="left:783.70px;top:651.34px;font-size:12px;line-height:24px;color:#161616;transform:scaleX(0.9333);transform-origin:0 0;">Q7-23-00018</span>
<span style="left:970.50px;top:651.34px;font-size:12px;line-height:24px;color:#161616;transform:scaleX(0.9571);transform-origin:0 0;">-25</span>
<span style="left:1157.50px;top:651.34px;font-size:12px;line-height:24px;color:#161616;transform:scaleX(0.9372);transform-origin:0 0;">-1</span>
<span style="left:1348.90px;top:651.34px;font-size:12px;line-height:24px;color:#161616;transform:scaleX(0.9158);transform-origin:0 0;">$0.00</span>
<span style="left:1434.50px;top:651.34px;font-size:12px;line-height:24px;color:#161616;transform:scaleX(0.9568);transform-origin:0 0;">Spring Valley</span>
<div style="left:6.2px;top:680.2px;width:13.6px;height:13.6px;border:2px solid #045c95;border-radius:2.5px;"></div>
<span style="left:34.70px;top:677.34px;font-size:12px;line-height:24px;color:#161616;transform:scaleX(0.9541);transform-origin:0 0;">02/22/2023</span>
<span style="left:222.10px;top:677.34px;font-size:12px;line-height:24px;color:#161616;transform:scaleX(0.9520);transform-origin:0 0;">&#x27;</span>
<span style="left:408.70px;top:677.34px;font-size:12px;line-height:24px;color:#161616;transform:scaleX(0.9225);transform-origin:0 0;">test1</span>
<span style="left:595.80px;top:677.34px;font-size:12px;line-height:24px;color:#161616;transform:scaleX(0.9701);transform-origin:0 0;">Adj-1798</span>
<span style="left:783.70px;top:677.34px;font-size:12px;line-height:24px;color:#161616;transform:scaleX(0.9333);transform-origin:0 0;">Q7-23-00019</span>
<span style="left:970.50px;top:677.34px;font-size:12px;line-height:24px;color:#161616;transform:scaleX(0.9571);transform-origin:0 0;">-26</span>
<span style="left:1157.50px;top:677.34px;font-size:12px;line-height:24px;color:#161616;transform:scaleX(0.9372);transform-origin:0 0;">-1</span>
<span style="left:1348.90px;top:677.34px;font-size:12px;line-height:24px;color:#161616;transform:scaleX(0.9158);transform-origin:0 0;">$0.00</span>
<span style="left:1434.50px;top:677.34px;font-size:12px;line-height:24px;color:#161616;transform:scaleX(0.9568);transform-origin:0 0;">Spring Valley</span>
<div style="left:0px;top:702px;width:1617px;height:26px;background:#edf4f8;"></div>
<div style="left:6.2px;top:706.2px;width:13.6px;height:13.6px;border:2px solid #045c95;border-radius:2.5px;"></div>
<span style="left:34.70px;top:703.34px;font-size:12px;line-height:24px;color:#161616;transform:scaleX(0.9541);transform-origin:0 0;">02/22/2023</span>
<span style="left:222.10px;top:703.34px;font-size:12px;line-height:24px;color:#161616;transform:scaleX(0.9520);transform-origin:0 0;">&#x27;</span>
<span style="left:408.70px;top:703.34px;font-size:12px;line-height:24px;color:#161616;transform:scaleX(0.9225);transform-origin:0 0;">test1</span>
<span style="left:595.80px;top:703.34px;font-size:12px;line-height:24px;color:#161616;transform:scaleX(0.9701);transform-origin:0 0;">Adj-1798</span>
<span style="left:783.70px;top:703.34px;font-size:12px;line-height:24px;color:#161616;transform:scaleX(0.9067);transform-origin:0 0;">SO-0033533</span>
<span style="left:970.50px;top:703.34px;font-size:12px;line-height:24px;color:#161616;transform:scaleX(0.9571);transform-origin:0 0;">-27</span>
<span style="left:1157.50px;top:703.34px;font-size:12px;line-height:24px;color:#161616;transform:scaleX(0.9372);transform-origin:0 0;">-1</span>
<span style="left:1348.90px;top:703.34px;font-size:12px;line-height:24px;color:#161616;transform:scaleX(0.9158);transform-origin:0 0;">$0.00</span>
<span style="left:1434.50px;top:703.34px;font-size:12px;line-height:24px;color:#161616;transform:scaleX(0.9568);transform-origin:0 0;">Spring Valley</span>
<div style="left:6.2px;top:732.2px;width:13.6px;height:13.6px;border:2px solid #045c95;border-radius:2.5px;"></div>
<span style="left:34.70px;top:729.34px;font-size:12px;line-height:24px;color:#161616;transform:scaleX(0.9541);transform-origin:0 0;">02/25/2023</span>
<span style="left:222.10px;top:729.34px;font-size:12px;line-height:24px;color:#161616;transform:scaleX(0.9520);transform-origin:0 0;">&#x27;</span>
<span style="left:408.70px;top:729.34px;font-size:12px;line-height:24px;color:#161616;transform:scaleX(0.9225);transform-origin:0 0;">test1</span>
<span style="left:595.80px;top:729.34px;font-size:12px;line-height:24px;color:#161616;transform:scaleX(0.9701);transform-origin:0 0;">Adj-1798</span>
<span style="left:783.70px;top:729.34px;font-size:12px;line-height:24px;color:#161616;transform:scaleX(0.9333);transform-origin:0 0;">Q7-23-00021</span>
<span style="left:970.50px;top:729.34px;font-size:12px;line-height:24px;color:#161616;transform:scaleX(0.9571);transform-origin:0 0;">-28</span>
<span style="left:1157.50px;top:729.34px;font-size:12px;line-height:24px;color:#161616;transform:scaleX(0.9372);transform-origin:0 0;">-1</span>
<span style="left:1348.90px;top:729.34px;font-size:12px;line-height:24px;color:#161616;transform:scaleX(0.9158);transform-origin:0 0;">$0.00</span>
<span style="left:1434.50px;top:729.34px;font-size:12px;line-height:24px;color:#161616;transform:scaleX(0.9568);transform-origin:0 0;">Spring Valley</span>
</div>
<div style="left:308px;top:195px;width:1px;height:776px;background:rgba(120,130,140,0.19);"></div>
<div style="left:495px;top:195px;width:1px;height:776px;background:rgba(120,130,140,0.19);"></div>
<div style="left:682px;top:195px;width:1px;height:776px;background:rgba(120,130,140,0.19);"></div>
<div style="left:869px;top:195px;width:1px;height:776px;background:rgba(120,130,140,0.19);"></div>
<div style="left:1056px;top:195px;width:1px;height:776px;background:rgba(120,130,140,0.19);"></div>
<div style="left:1243px;top:195px;width:1px;height:776px;background:rgba(120,130,140,0.19);"></div>
<div style="left:1431px;top:195px;width:1px;height:776px;background:rgba(120,130,140,0.19);"></div>
<div style="left:1618px;top:195px;width:1px;height:776px;background:rgba(120,130,140,0.19);"></div>
<div style="left:1708px;top:195px;width:1px;height:776px;background:rgba(120,130,140,0.19);"></div>
<div style="left:285.2px;top:201.1px;width:13.6px;height:14px;background:transparent;border:2px solid #045c95;border-radius:2.5px;"></div>
<span style="left:313.70px;top:197.74px;font-size:12px;line-height:24px;color:#141414;transform:scaleX(0.9271);transform-origin:0 0;">Date</span>
<span style="left:500.40px;top:197.74px;font-size:12px;line-height:24px;color:#141414;">Item Name</span>
<span style="left:687.70px;top:197.74px;font-size:12px;line-height:24px;color:#141414;">Item Description</span>
<span style="left:874.70px;top:197.74px;font-size:12px;line-height:24px;color:#141414;transform:scaleX(0.9748);transform-origin:0 0;">Added by Source #</span>
<span style="left:1062.70px;top:197.74px;font-size:12px;line-height:24px;color:#141414;transform:scaleX(0.9509);transform-origin:0 0;">Used by Source #</span>
<span style="left:1249.50px;top:197.74px;font-size:12px;line-height:24px;color:#141414;transform:scaleX(0.9747);transform-origin:0 0;">Stock Qty</span>
<span style="left:1436.50px;top:197.74px;font-size:12px;line-height:24px;color:#141414;transform:scaleX(1.0117);transform-origin:0 0;">Adjust Qty</span>
<span style="left:1623.80px;top:197.74px;font-size:12px;line-height:24px;color:#141414;transform:scaleX(0.9524);transform-origin:0 0;">Cost</span>
<span style="left:1713.50px;top:197.74px;font-size:12px;line-height:24px;color:#141414;transform:scaleX(0.9414);transform-origin:0 0;">Store</span>
<div style="left:1900px;top:243px;width:7px;height:198px;background:#dadada;"></div>
<div style="left:1786px;top:186px;width:140px;height:215px;background:#fff;border:1px solid #a6a6a6;box-shadow:1px 1px 2px rgba(0,0,0,.18);box-sizing:border-box;"></div>
<span style="left:1789.90px;top:189.94px;font-size:12px;line-height:24px;color:#1a1a1a;transform:scaleX(0.9310);transform-origin:0 0;">Date</span>
<svg style="left:1898.2px;top:192.9px" width="17.6" height="17.8" viewBox="0 0 18 18"><rect width="18" height="18" rx="2.4" fill="#045c95"/><path d="M3.4 9.2L7.2 13L14.8 4.9" stroke="#fff" stroke-width="1.7" fill="none"/></svg>
<span style="left:1789.90px;top:212.94px;font-size:12px;line-height:24px;color:#1a1a1a;">Item Name</span>
<svg style="left:1898.2px;top:215.9px" width="17.6" height="17.8" viewBox="0 0 18 18"><rect width="18" height="18" rx="2.4" fill="#045c95"/><path d="M3.4 9.2L7.2 13L14.8 4.9" stroke="#fff" stroke-width="1.7" fill="none"/></svg>
<span style="left:1789.90px;top:235.94px;font-size:12px;line-height:24px;color:#1a1a1a;">Item Description</span>
<svg style="left:1898.2px;top:238.9px" width="17.6" height="17.8" viewBox="0 0 18 18"><rect width="18" height="18" rx="2.4" fill="#045c95"/><path d="M3.4 9.2L7.2 13L14.8 4.9" stroke="#fff" stroke-width="1.7" fill="none"/></svg>
<span style="left:1789.90px;top:258.94px;font-size:12px;line-height:24px;color:#1a1a1a;transform:scaleX(0.9758);transform-origin:0 0;">Added by Source #</span>
<svg style="left:1898.2px;top:261.9px" width="17.6" height="17.8" viewBox="0 0 18 18"><rect width="18" height="18" rx="2.4" fill="#045c95"/><path d="M3.4 9.2L7.2 13L14.8 4.9" stroke="#fff" stroke-width="1.7" fill="none"/></svg>
<span style="left:1789.90px;top:281.94px;font-size:12px;line-height:24px;color:#1a1a1a;transform:scaleX(0.9509);transform-origin:0 0;">Used by Source #</span>
<svg style="left:1898.2px;top:284.9px" width="17.6" height="17.8" viewBox="0 0 18 18"><rect width="18" height="18" rx="2.4" fill="#045c95"/><path d="M3.4 9.2L7.2 13L14.8 4.9" stroke="#fff" stroke-width="1.7" fill="none"/></svg>
<span style="left:1789.90px;top:304.94px;font-size:12px;line-height:24px;color:#1a1a1a;transform:scaleX(0.9747);transform-origin:0 0;">Stock Qty</span>
<svg style="left:1898.2px;top:307.9px" width="17.6" height="17.8" viewBox="0 0 18 18"><rect width="18" height="18" rx="2.4" fill="#045c95"/><path d="M3.4 9.2L7.2 13L14.8 4.9" stroke="#fff" stroke-width="1.7" fill="none"/></svg>
<span style="left:1789.90px;top:327.94px;font-size:12px;line-height:24px;color:#1a1a1a;transform:scaleX(1.0117);transform-origin:0 0;">Adjust Qty</span>
<svg style="left:1898.2px;top:330.9px" width="17.6" height="17.8" viewBox="0 0 18 18"><rect width="18" height="18" rx="2.4" fill="#045c95"/><path d="M3.4 9.2L7.2 13L14.8 4.9" stroke="#fff" stroke-width="1.7" fill="none"/></svg>
<span style="left:1789.90px;top:350.94px;font-size:12px;line-height:24px;color:#1a1a1a;transform:scaleX(0.9524);transform-origin:0 0;">Cost</span>
<svg style="left:1898.2px;top:353.9px" width="17.6" height="17.8" viewBox="0 0 18 18"><rect width="18" height="18" rx="2.4" fill="#045c95"/><path d="M3.4 9.2L7.2 13L14.8 4.9" stroke="#fff" stroke-width="1.7" fill="none"/></svg>
<span style="left:1789.90px;top:373.94px;font-size:12px;line-height:24px;color:#1a1a1a;transform:scaleX(0.9414);transform-origin:0 0;">Store</span>
<svg style="left:1898.2px;top:376.9px" width="17.6" height="17.8" viewBox="0 0 18 18"><rect width="18" height="18" rx="2.4" fill="#045c95"/><path d="M3.4 9.2L7.2 13L14.8 4.9" stroke="#fff" stroke-width="1.7" fill="none"/></svg>
<div style="left:303px;top:177px;width:113px;height:41px;border:5px solid #ff0000;border-radius:2px;"></div>
<div style="left:1215px;top:174px;width:336px;height:44px;border:5px solid #ff0000;border-radius:2px;"></div>
<div style="left:1761px;top:176px;width:169px;height:38px;border:5px solid #ff0000;border-radius:2px;"></div>
<div style="left:1772px;top:299px;width:158px;height:50px;border:5px solid #ff0000;border-radius:2px;"></div>
</div></body></html>
